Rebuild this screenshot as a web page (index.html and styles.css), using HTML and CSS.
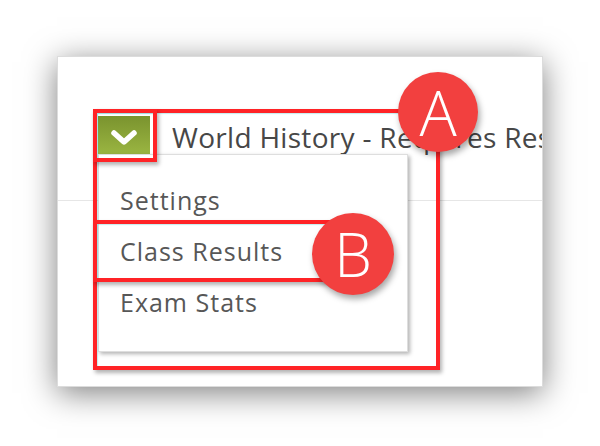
FILE: index.html
```html
<!DOCTYPE html>
<html lang="en">
<head>
    <meta charset="UTF-8">
    <meta name="viewport" content="width=device-width, initial-scale=1.0">
    <title>Exam Menu</title>
    <link rel="stylesheet" href="styles.css">
</head>
<body>

<div class="card">
    <div class="exam-header">
        <button class="toggle" type="button" aria-label="Open menu">
            <svg width="28" height="18" viewBox="0 0 28 18">
                <path d="M4 4 L14 13 L24 4" fill="none" stroke="#fff" stroke-width="5.5" stroke-linecap="round" stroke-linejoin="round"/>
            </svg>
        </button>
        <span class="exam-title">World History - Requires Response</span>
    </div>

    <ul class="dropdown">
        <li>Settings</li>
        <li>Class Results</li>
        <li>Exam Stats</li>
    </ul>

    <!-- callout annotations -->
    <div class="mark mark-menu"></div>
    <div class="mark mark-toggle"></div>
    <div class="mark mark-results"></div>
    <div class="badge badge-a">A</div>
    <div class="badge badge-b">B</div>
</div>

</body>
</html>
```

FILE: styles.css
```css
body {
    margin: 0;
    background-color: #fff;
    font-family: "Open Sans", "Liberation Sans", sans-serif;
    height: 446px;
    overflow: hidden;
}

.card {
    position: relative;
    margin: 56px 0 0 57px;
    width: 486px;
    height: 331px;
    box-sizing: border-box;
    background-color: #fff;
    border: 1px solid #dcdcdc;
    box-shadow: 0 6px 30px rgba(0,0,0,0.5);
    overflow: hidden;
}

.exam-header {
    display: flex;
    align-items: center;
    padding: 57px 0 44px 40px;
    border-bottom: 1px solid #e6e6e6;
    white-space: nowrap;
}

.toggle {
    flex: none;
    width: 52px;
    height: 38px;
    padding: 0;
    border: none;
    background: linear-gradient(#7a932e, #9ab541);
    display: flex;
    align-items: center;
    justify-content: center;
}

.toggle svg {
    margin-top: 5px;
}

.exam-title {
    margin-left: 22px;
    padding-top: 4px;
    font-size: 28px;
    letter-spacing: 0.3px;
    color: #474747;
}

.dropdown {
    position: absolute;
    left: 40px;
    top: 97px;
    width: 310px;
    height: 198px;
    box-sizing: border-box;
    margin: 0;
    padding: 20px 0 0 21px;
    list-style: none;
    background-color: #fff;
    border: 1px solid #dedede;
    box-shadow: 2px 2px 4px rgba(0,0,0,0.3);
}

.dropdown li {
    font-size: 25px;
    line-height: 51px;
    letter-spacing: 1px;
    color: #575757;
}

.mark {
    position: absolute;
    box-sizing: border-box;
    border: 4px solid #ff2326;
    box-shadow: 2px 3px 4px rgba(0,0,0,0.3), inset 1px 1px 1px rgba(80,200,210,0.35);
}

.mark-menu {
    left: 35px;
    top: 52px;
    width: 347px;
    height: 261px;
}

.mark-toggle {
    left: 35px;
    top: 52px;
    width: 64px;
    height: 53px;
}

.mark-results {
    left: 35px;
    top: 163px;
    width: 250px;
    height: 62px;
}

.badge {
    position: absolute;
    width: 80px;
    height: 80px;
    border-radius: 50%;
    background-color: #f2403f;
    color: #fff;
    font-family: "Open Sans", "Liberation Sans", sans-serif;
    font-weight: 300;
    font-size: 62px;
    line-height: 80px;
    text-align: center;
    box-shadow: 2px 4px 6px rgba(0,0,0,0.35);
}

.badge-a {
    left: 340px;
    top: 15px;
}

.badge-b {
    left: 254px;
    top: 156px;
    width: 82px;
    height: 82px;
    line-height: 82px;
    font-size: 60px;
}
```
